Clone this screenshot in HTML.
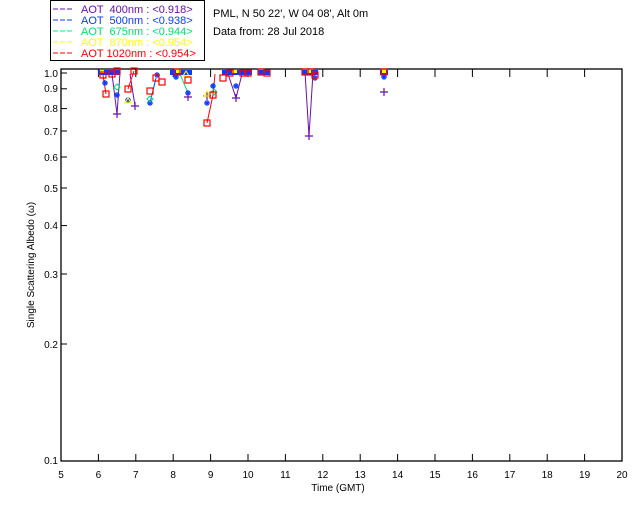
<!DOCTYPE html>
<html><head><meta charset="utf-8"><style>
html,body{margin:0;padding:0;background:#fff;}
svg{display:block;font-family:"Liberation Sans",sans-serif;}
</style></head><body>
<svg width="640" height="512" viewBox="0 0 640 512" xmlns="http://www.w3.org/2000/svg">
<rect width="640" height="512" fill="#fff"/>
<!-- legend -->
<rect x="50.5" y="0.5" width="154" height="60" fill="#fff" stroke="#000"/>
<g font-size="11">
<line x1="53" y1="9" x2="74" y2="9" stroke="#6a0fb0" stroke-dasharray="5,2"/>
<text x="81" y="13" fill="#6a0fb0" xml:space="preserve">AOT  400nm : &lt;0.918&gt;</text>
<line x1="53" y1="20" x2="74" y2="20" stroke="#0a3cff" stroke-dasharray="5,2"/>
<text x="81" y="24" fill="#0a3cff" xml:space="preserve">AOT  500nm : &lt;0.938&gt;</text>
<line x1="53" y1="31" x2="74" y2="31" stroke="#00f080" stroke-dasharray="5,2"/>
<text x="81" y="35" fill="#00e070" xml:space="preserve">AOT  675nm : &lt;0.944&gt;</text>
<line x1="53" y1="42" x2="74" y2="42" stroke="#ffff00" stroke-dasharray="5,2"/>
<text x="81" y="46" fill="#ffff00" xml:space="preserve">AOT  870nm : &lt;0.954&gt;</text>
<line x1="53" y1="53" x2="74" y2="53" stroke="#ff0000" stroke-dasharray="5,2"/>
<text x="81" y="57" fill="#ff0000" xml:space="preserve">AOT 1020nm : &lt;0.954&gt;</text>
</g>
<text x="213" y="17" font-size="11">PML, N 50 22', W 04 08', Alt 0m</text>
<text x="213" y="35" font-size="11">Data from: 28 Jul 2018</text>
<!-- axes -->
<rect x="61" y="69" width="561" height="392" fill="none" stroke="#000" stroke-width="1.3"/>
<g stroke="#000">
<line x1="98.4" y1="461" x2="98.4" y2="454"/><line x1="135.8" y1="461" x2="135.8" y2="454"/><line x1="173.2" y1="461" x2="173.2" y2="454"/><line x1="210.6" y1="461" x2="210.6" y2="454"/><line x1="248" y1="461" x2="248" y2="454"/><line x1="285.4" y1="461" x2="285.4" y2="454"/><line x1="322.8" y1="461" x2="322.8" y2="454"/><line x1="360.2" y1="461" x2="360.2" y2="454"/><line x1="397.6" y1="461" x2="397.6" y2="454"/><line x1="435" y1="461" x2="435" y2="454"/><line x1="472.4" y1="461" x2="472.4" y2="454"/><line x1="509.8" y1="461" x2="509.8" y2="454"/><line x1="547.2" y1="461" x2="547.2" y2="454"/><line x1="584.6" y1="461" x2="584.6" y2="454"/>
<line x1="98.4" y1="69" x2="98.4" y2="77"/><line x1="135.8" y1="69" x2="135.8" y2="77"/><line x1="173.2" y1="69" x2="173.2" y2="77"/><line x1="210.6" y1="69" x2="210.6" y2="77"/><line x1="248" y1="69" x2="248" y2="77"/><line x1="285.4" y1="69" x2="285.4" y2="77"/><line x1="322.8" y1="69" x2="322.8" y2="77"/><line x1="360.2" y1="69" x2="360.2" y2="77"/><line x1="397.6" y1="69" x2="397.6" y2="77"/><line x1="435" y1="69" x2="435" y2="77"/><line x1="472.4" y1="69" x2="472.4" y2="77"/><line x1="509.8" y1="69" x2="509.8" y2="77"/><line x1="547.2" y1="69" x2="547.2" y2="77"/><line x1="584.6" y1="69" x2="584.6" y2="77"/>
<line x1="61" y1="73" x2="67" y2="73"/><line x1="61" y1="88.8" x2="67" y2="88.8"/><line x1="61" y1="108.6" x2="67" y2="108.6"/><line x1="61" y1="131" x2="67" y2="131"/><line x1="61" y1="157" x2="67" y2="157"/><line x1="61" y1="188" x2="67" y2="188"/><line x1="61" y1="225.6" x2="67" y2="225.6"/><line x1="61" y1="274" x2="67" y2="274"/><line x1="61" y1="344" x2="67" y2="344"/>
</g>
<g font-size="10" text-anchor="end">
<text x="58" y="77">1.0</text><text x="58" y="92">0.9</text><text x="58" y="112">0.8</text><text x="58" y="135">0.7</text><text x="58" y="161">0.6</text><text x="58" y="192">0.5</text><text x="58" y="229">0.4</text><text x="58" y="278">0.3</text><text x="58" y="348">0.2</text><text x="58" y="464">0.1</text>
</g>
<g font-size="10" text-anchor="middle">
<text x="61" y="478">5</text><text x="98.4" y="478">6</text><text x="135.8" y="478">7</text><text x="173.2" y="478">8</text><text x="210.6" y="478">9</text><text x="248" y="478">10</text><text x="285.4" y="478">11</text><text x="322.8" y="478">12</text><text x="360.2" y="478">13</text><text x="397.6" y="478">14</text><text x="435" y="478">15</text><text x="472.4" y="478">16</text><text x="509.8" y="478">17</text><text x="547.2" y="478">18</text><text x="584.6" y="478">19</text><text x="622" y="478">20</text>
<text x="338" y="491">Time (GMT)</text>
<text transform="translate(34,265) rotate(-90)">Single Scattering Albedo (ω)</text>
</g>
<!-- data lines -->
<g fill="none" stroke-width="1">
<polyline stroke="#6a0fb0" points="112,74 117,114 120,73"/>
<polyline stroke="#6a0fb0" points="305,72 309,136 313,73"/>
<polyline stroke="#6a0fb0" points="228,74 236,98 242,74"/>
<polyline stroke="#6a0fb0" points="130,74 135,106"/>
<polyline stroke="#ff0000" points="207,123 213,95 215,74"/>
<polyline stroke="#ff0000" points="128,89 134,71"/>
<polyline stroke="#0a3cff" points="150,103 156,78"/>
<polyline stroke="#00e070" points="180,74 188,93"/>
<polyline stroke="#ff0000" points="103,75 106,94"/>
</g>
<!-- top clusters -->
<g>
<rect x="98" y="70" width="22" height="5" fill="#0a3cff"/>
<rect x="170" y="70" width="22" height="5" fill="#0a3cff"/>
<rect x="222" y="70" width="30" height="5" fill="#0a3cff"/>
<rect x="258" y="70" width="12" height="5" fill="#0a3cff"/>
<rect x="302" y="70" width="16" height="5" fill="#0a3cff"/>
<rect x="380" y="70" width="8" height="5" fill="#0a3cff"/>
<g fill="#ffff00"><rect x="100" y="70" width="4" height="3"/><rect x="176" y="70" width="5" height="3"/><rect x="232" y="70" width="5" height="3"/><rect x="307" y="70" width="4" height="3"/><rect x="382" y="70" width="4" height="3"/></g>
</g>
<!-- blue stars -->
<g stroke="#0a3cff" stroke-width="1.2">
<path d="M102,83h6M105,80v6M103,81l4,4M107,81l-4,4"/>
<path d="M114,95h6M117,92v6M115,93l4,4M119,93l-4,4"/>
<path d="M125,100h6M128,97v6M126,98l4,4M130,98l-4,4"/>
<path d="M147,103h6M150,100v6M148,101l4,4M152,101l-4,4"/>
<path d="M185,93h6M188,90v6M186,91l4,4M190,91l-4,4"/>
<path d="M210,86h6M213,83v6M211,84l4,4M215,84l-4,4"/>
<path d="M173,77h6M176,74v6M174,75l4,4M178,75l-4,4"/>
<path d="M204,103h6M207,100v6M205,101l4,4M209,101l-4,4"/>
<path d="M381,77h6M384,74v6M382,75l4,4M386,75l-4,4"/>
<path d="M312,78h6M315,75v6M313,76l4,4M317,76l-4,4"/>
<path d="M154,75h6M157,72v6M155,73l4,4M159,73l-4,4"/>
<path d="M233,86h6M236,83v6M234,84l4,4M238,84l-4,4"/>
</g>
<!-- purple plus -->
<g stroke="#6a0fb0" stroke-width="1.2">
<path d="M113,114h8M117,110v8"/>
<path d="M131,106h8M135,102v8"/>
<path d="M232,98h8M236,94v8"/>
<path d="M305,136h8M309,132v8"/>
<path d="M380,92h8M384,88v8"/>
<path d="M184,97h8M188,93v8"/>
<path d="M203,96h8M207,92v8"/>
</g>
<!-- green diamonds -->
<g stroke="#00e070" fill="none">
<path d="M117,84l3,3-3,3-3-3z"/><path d="M150,96l3,3-3,3-3-3z"/><path d="M214,89l3,3-3,3-3-3z"/>
</g>
<!-- yellow triangles -->
<g stroke="#ffff00" fill="none">
<path d="M128,98l3,5h-6z"/><path d="M207,91l3,5h-6z"/><path d="M186,71l3,5h-6z"/>
</g>
<!-- red squares -->
<g stroke="#ff0000" fill="none" stroke-width="1.2">
<rect x="100" y="72" width="6" height="6"/><rect x="103" y="91" width="6" height="6"/><rect x="109" y="71" width="6" height="6"/><rect x="114" y="68" width="6" height="6"/><rect x="125" y="86" width="6" height="6"/><rect x="131" y="68" width="6" height="6"/><rect x="147" y="88" width="6" height="6"/><rect x="153" y="75" width="6" height="6"/><rect x="159" y="79" width="6" height="6"/><rect x="174" y="69" width="6" height="6"/><rect x="185" y="77" width="6" height="6"/><rect x="204" y="120" width="6" height="6"/><rect x="210" y="92" width="6" height="6"/><rect x="220" y="75" width="6" height="6"/><rect x="227" y="70" width="6" height="6"/><rect x="240" y="70" width="6" height="6"/><rect x="245" y="70" width="6" height="6"/><rect x="258" y="69" width="6" height="6"/><rect x="264" y="70" width="6" height="6"/><rect x="302" y="69" width="6" height="6"/><rect x="308" y="69" width="6" height="6"/><rect x="312" y="72" width="6" height="6"/><rect x="381" y="69" width="6" height="6"/>
</g>
</svg>
</body></html>
